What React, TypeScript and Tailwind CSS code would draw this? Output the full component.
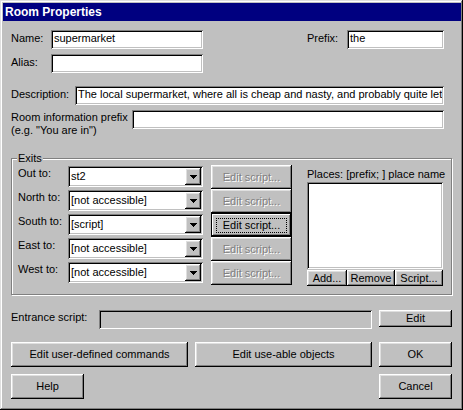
import React from 'react'

const sunken = 'shadow-[inset_1px_1px_0_#808080,inset_-1px_-1px_0_#fff,inset_2px_2px_0_#000,inset_-2px_-2px_0_#c0c0c0]'
const raised = 'shadow-[inset_-1px_-1px_0_#000,inset_1px_1px_0_#fff,inset_-2px_-2px_0_#808080,inset_2px_2px_0_#dfdfdf]'

type BoxProps = {value?: string; className?: string; disabled?: boolean}

const TextBox: React.FC<BoxProps> = ({value = '', className = '', disabled}) => (
    <div className={`${sunken} h-[19px] p-[2px] ${disabled ? 'bg-[#c0c0c0]' : 'bg-white'} ${className}`}>
        <div className='h-full overflow-hidden whitespace-nowrap pl-px leading-[13px]'>{value}</div>
    </div>
)

const Combo: React.FC<{value: string}> = ({value}) => (
    <div className={`${sunken} relative mt-px h-[21px] w-[135px] bg-white`}>
        <div className='pl-[3px] pt-[2px] leading-[17px] whitespace-nowrap'>{value}</div>
        <div className={`${raised} absolute right-[2px] top-[2px] flex h-[17px] w-[16px] items-center justify-center bg-[#c0c0c0]`}>
            <svg width='7' height='4' viewBox='0 0 7 4' shapeRendering='crispEdges'>
                <path d='M0 0h7v1h-1v1h-1v1h-1v1h-1v-1h-1v-1h-1v-1h-1z' fill='#000'/>
            </svg>
        </div>
    </div>
)

type BtnProps = {children: React.ReactNode; className?: string; disabled?: boolean; focused?: boolean}

const Btn: React.FC<BtnProps> = ({children, className = '', disabled, focused}) => {
    if (focused) {
        return (
            <div className={`flex items-center justify-center bg-[#c0c0c0] shadow-[inset_0_0_0_1px_#000,inset_-2px_-2px_0_#000,inset_2px_2px_0_#fff,inset_-3px_-3px_0_#808080] ${className}`}>
                <span className='flex h-[15px] w-[71px] items-center justify-center border border-dotted border-black'>{children}</span>
            </div>
        )
    }
    return (
        <div className={`${raised} flex items-center justify-center bg-[#c0c0c0] whitespace-nowrap ${className}`}>
            <span className={disabled ? 'text-[#808080] [text-shadow:1px_1px_0_#fff]' : ''}>{children}</span>
        </div>
    )
}

const exits = [
    {label: 'Out to:', value: 'st2', script: false},
    {label: 'North to:', value: '[not accessible]', script: false},
    {label: 'South to:', value: '[script]', script: true},
    {label: 'East to:', value: '[not accessible]', script: false},
    {label: 'West to:', value: '[not accessible]', script: false},
]

const App: React.FC = () => {
    return (
        <div className="h-[410px] w-[463px] bg-[#c0c0c0] pb-[3px] pl-[3px] pr-[2px] pt-[3px] font-['Liberation_Sans',Arial,sans-serif] text-[11px] text-black shadow-[inset_-1px_-1px_0_#000,inset_1px_1px_0_#dfdfdf,inset_-2px_-2px_0_#808080,inset_2px_2px_0_#fff]">
            <div className='flex h-[18px] items-center bg-[#000080] pl-[2px] text-[12px] font-bold leading-[18px] text-white'>
                Room Properties
            </div>

            <div className='flex flex-col pl-[8px]'>
                {/* name / prefix */}
                <div className='mt-[9px] flex h-[19px] items-start'>
                    <span className='w-[40px] leading-[16px]'>Name:</span>
                    <TextBox value='supermarket' className='w-[152px]'/>
                    <span className='ml-[104px] w-[40px] leading-[16px]'>Prefix:</span>
                    <TextBox value='the' className='w-[97px]'/>
                </div>
                <div className='mt-[5px] flex h-[19px] items-start'>
                    <span className='w-[40px] leading-[16px]'>Alias:</span>
                    <TextBox className='w-[152px]'/>
                </div>
                <div className='mt-[13px] flex h-[19px] items-start'>
                    <span className='w-[64px] leading-[16px]'>Description:</span>
                    <TextBox value='The local supermarket, where all is cheap and nasty, and probably quite lethal to your health.' className='w-[369px]'/>
                </div>
                <div className='mt-[5px] flex items-start'>
                    <span className='w-[121px] pt-px leading-[13px]'>Room information prefix<br/>(e.g. "You are in")</span>
                    <TextBox className='w-[312px]'/>
                </div>

                {/* exits group */}
                <div className='relative mt-[21px] h-[137px] w-[441px] border border-[#808080] shadow-[inset_1px_1px_0_#fff,1px_1px_0_#fff]'>
                    <span className='absolute -top-[7px] left-[5px] bg-[#c0c0c0] px-px leading-[13px]'>Exits</span>
                    <div className='flex pl-[6px]'>
                        <div className='flex flex-col pt-[6px]'>
                            {exits.map((exit) => (
                                <div key={exit.label} className='flex h-[24px] items-start'>
                                    <span className='w-[50px] pt-[2px] leading-[13px]'>{exit.label}</span>
                                    <Combo value={exit.value}/>
                                    <Btn className='ml-[8px] h-[24px] w-[81px]' disabled={!exit.script} focused={exit.script}>
                                        Edit script...
                                    </Btn>
                                </div>
                            ))}
                        </div>
                        <div className='ml-[15px] flex flex-col pt-[9px]'>
                            <span className='h-[13px] leading-[13px] whitespace-nowrap'>Places: [prefix; ] place name</span>
                            <div className={`${sunken} mt-px h-[87px] w-[136px] bg-white`}/>
                            <div className='mt-px flex'>
                                <Btn className='h-[16px] w-[40px]'>Add...</Btn>
                                <Btn className='h-[16px] w-[48px]'>Remove</Btn>
                                <Btn className='h-[16px] w-[48px]'>Script...</Btn>
                            </div>
                        </div>
                    </div>
                </div>

                {/* entrance script */}
                <div className='mt-[15px] flex items-start'>
                    <span className='w-[88px] pt-px leading-[13px]'>Entrance script:</span>
                    <TextBox className='w-[273px]' disabled/>
                    <Btn className='ml-[7px] h-[17px] w-[73px]'>Edit</Btn>
                </div>

                {/* bottom buttons */}
                <div className='mt-[13px] flex gap-[7px]'>
                    <Btn className='h-[25px] w-[177px]'>Edit user-defined commands</Btn>
                    <Btn className='h-[25px] w-[177px]'>Edit use-able objects</Btn>
                    <Btn className='h-[25px] w-[73px]'>OK</Btn>
                </div>
                <div className='mt-[7px] flex w-[441px] justify-between'>
                    <Btn className='h-[25px] w-[73px]'>Help</Btn>
                    <Btn className='h-[25px] w-[73px]'>Cancel</Btn>
                </div>
            </div>
        </div>
    )
}

export default App
